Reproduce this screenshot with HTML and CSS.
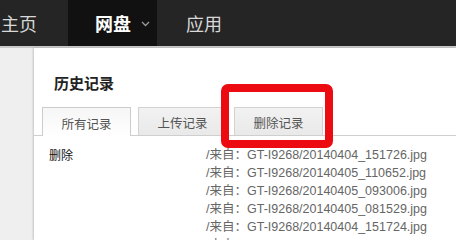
FILE: index.html
```html
<!DOCTYPE html>
<html lang="zh">
<head>
<meta charset="utf-8">
<link rel="stylesheet" href="styles.css">
</head>
<body>
<header class="nav">
  <a class="nav-item first">主页</a>
  <a class="nav-item active">网盘<svg class="chev" width="9" height="6" viewBox="0 0 9 6"><path d="M1 1 L4.5 4.5 L8 1" fill="none" stroke="#9a9a9a" stroke-width="1.3"/></svg></a>
  <a class="nav-item third">应用</a>
</header>
<main class="main">
  <div class="gutter"></div>
  <section class="panel">
    <h2 class="title">历史记录</h2>
    <div class="tabs">
      <div class="tab active">所有记录</div>
      <div class="tab">上传记录</div>
      <div class="tab">删除记录</div>
    </div>
    <div class="record">
      <div class="op">删除</div>
      <ul class="files">
        <li>/来自：GT-I9268/20140404_151726.jpg</li>
        <li>/来自：GT-I9268/20140405_110652.jpg</li>
        <li>/来自：GT-I9268/20140405_093006.jpg</li>
        <li>/来自：GT-I9268/20140405_081529.jpg</li>
        <li>/来自：GT-I9268/20140404_151724.jpg</li>
        <li>/来自：GT-I9268/20140405_093011.jpg</li>
      </ul>
    </div>
  </section>
</main>
<div class="mark"></div>
</body>
</html>
```
FILE: styles.css
```css
html, body {
  margin: 0;
  padding: 0;
}
body {
  width: 456px;
  height: 240px;
  overflow: hidden;
  background: #efefef;
  font-family: "Noto Sans CJK SC", sans-serif;
  position: relative;
}
.nav {
  display: flex;
  height: 46px;
  background: #252525;
  border-bottom: 2px solid #c9c9c9;
}
.nav-item {
  display: flex;
  align-items: center;
  height: 46px;
  font-size: 18px;
  color: #d8d8d8;
  box-sizing: border-box;
}
.nav-item.first {
  width: 68px;
  padding-left: 1px;
}
.nav-item.active {
  width: 89px;
  padding-left: 27px;
  background: #111111;
  color: #ffffff;
  font-weight: bold;
}
.chev {
  margin-left: 10px;
  margin-top: 2px;
}
.nav-item.third {
  padding-left: 29px;
}
.main {
  display: flex;
  height: 192px;
}
.gutter {
  width: 34px;
  flex: none;
  background: #efefef;
}
.panel {
  flex: 1;
  background: #ffffff;
  box-shadow: -1px 0 2px rgba(0, 0, 0, 0.18);
}
.title {
  margin: 25px 0 0 20px;
  font-size: 15px;
  line-height: 20px;
  font-weight: bold;
  color: #222;
}
.tabs {
  display: flex;
  gap: 7px;
  margin-top: 14px;
  padding-left: 8px;
  border-bottom: 1px solid #cfcfcf;
  height: 28px;
}
.tab {
  width: 89px;
  height: 28px;
  box-sizing: border-box;
  border: 1px solid #d2d2d2;
  border-bottom: none;
  background: linear-gradient(#f2f2f2, #e9e9e9);
  font-size: 12.5px;
  color: #555;
  display: flex;
  align-items: center;
  justify-content: center;
  padding-top: 2px;
}
.tab.active {
  background: linear-gradient(#f6f6f6, #ffffff);
  height: 29px;
  border-color: #cccccc;
}
.record {
  display: flex;
  margin-top: 10px;
}
.op {
  width: 157px;
  padding-left: 15px;
  font-size: 12px;
  line-height: 18px;
  color: #111;
}
.files {
  list-style: none;
  margin: 0;
  padding: 0;
}
.files li {
  font-family: "Liberation Sans", "Noto Sans CJK SC", sans-serif;
  font-size: 12.5px;
  line-height: 18px;
  color: #666;
  white-space: nowrap;
}
.mark {
  position: absolute;
  left: 221px;
  top: 84px;
  width: 112px;
  height: 64px;
  box-sizing: border-box;
  border: 8px solid #ec0b10;
  border-radius: 7px;
}
```
